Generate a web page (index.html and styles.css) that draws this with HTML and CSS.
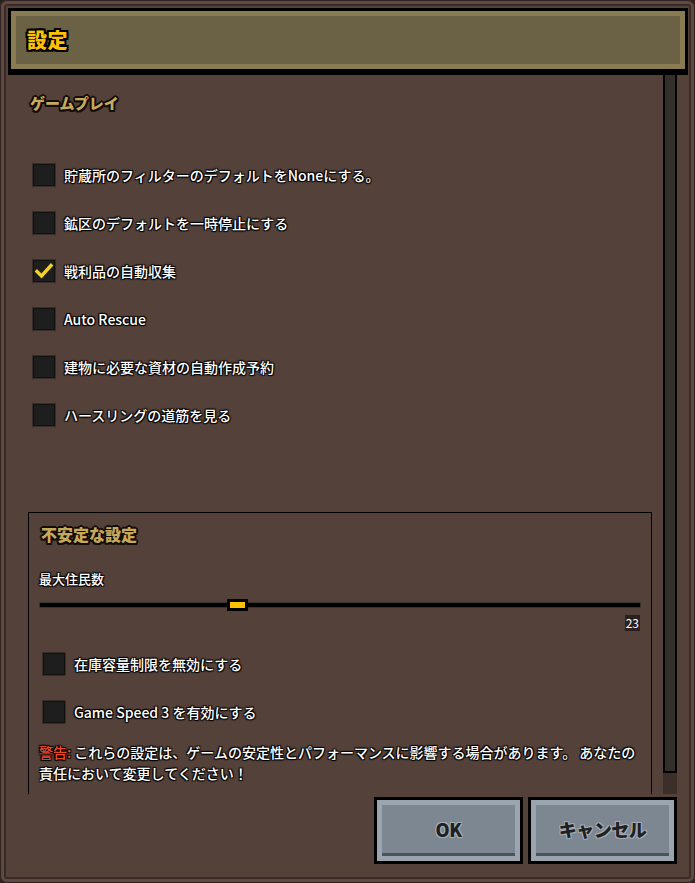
FILE: index.html
```html
<!DOCTYPE html>
<html lang="ja">
<head>
  <meta charset="UTF-8">
  <title>設定</title>
  <link rel="stylesheet" href="styles.css">
</head>
<body>
  <div class="window">
    <header class="title-bar">
      <h1>設定</h1>
    </header>

    <div class="scroll-area">
      <div class="content">
        <h2 class="section-title">ゲームプレイ</h2>

        <div class="option"><span class="box"></span><span class="label">貯蔵所のフィルターのデフォルトをNoneにする。</span></div>
        <div class="option"><span class="box"></span><span class="label">鉱区のデフォルトを一時停止にする</span></div>
        <div class="option">
          <span class="box">
            <svg viewBox="0 0 22 22" width="22" height="22"><path d="M4 11.5 L8.5 16 L18 5.5" fill="none" stroke="#f2cf2c" stroke-width="3.4" stroke-linecap="square" stroke-linejoin="miter"/></svg>
          </span>
          <span class="label">戦利品の自動収集</span>
        </div>
        <div class="option"><span class="box"></span><span class="label">Auto Rescue</span></div>
        <div class="option"><span class="box"></span><span class="label">建物に必要な資材の自動作成予約</span></div>
        <div class="option"><span class="box"></span><span class="label">ハースリングの道筋を見る</span></div>

        <div class="unstable">
          <h2 class="section-title big">不安定な設定</h2>
          <div class="slider-label">最大住民数</div>
          <div class="slider">
            <div class="track"></div>
            <div class="thumb" style="left: 187px;"></div>
          </div>
          <div class="slider-value"><span>23</span></div>

          <div class="option small"><span class="box"></span><span class="label">在庫容量制限を無効にする</span></div>
          <div class="option small"><span class="box"></span><span class="label">Game Speed 3 を有効にする</span></div>

          <p class="warning"><span class="warn">警告:</span> これらの設定は、ゲームの安定性とパフォーマンスに影響する場合があります。 あなたの<br>責任において変更してください！</p>
        </div>
      </div>

      <div class="scrollbar">
        <div class="scroll-thumb"></div>
      </div>
    </div>

    <div class="buttons">
      <button class="btn">OK</button>
      <button class="btn">キャンセル</button>
    </div>
  </div>
</body>
</html>
```

FILE: styles.css
```css
body {
  margin: 0;
  padding: 0;
  background-color: #2a1f1d;
  font-family: "Noto Sans CJK JP", "Noto Sans", sans-serif;
  color: white;
}

.window {
  width: 695px;
  height: 883px;
  box-sizing: border-box;
  padding: 8px 7px 0 8px;
  background-color: #54413a;
  border-radius: 7px;
  box-shadow: inset 0 0 0 1px #2e2220, inset 0 0 0 4px #5f4a43, inset 0 0 0 6px #3a2b28;
  display: flex;
  flex-direction: column;
  overflow: hidden;
}

/* title bar */
.title-bar {
  height: 67px;
  flex-shrink: 0;
  box-sizing: border-box;
  background-color: #6b6246;
  border: 3px solid #000;
  border-bottom-width: 6px;
  box-shadow: inset 0 0 0 5px #8a7c52;
  display: flex;
  align-items: center;
  padding-left: 16px;
}

.title-bar h1 {
  margin: 0;
  font-size: 20px;
  font-weight: 900;
  color: #ffc000;
  letter-spacing: 0.5px;
  text-shadow: -2px -2px 0 #000, 2px -2px 0 #000, -2px 2px 0 #000, 2px 2px 0 #000,
    0 2px 0 #000, 0 -2px 0 #000, 2px 0 0 #000, -2px 0 0 #000;
  position: relative;
  top: -1px;
}

/* scrolling panel */
.scroll-area {
  height: 719px;
  flex-shrink: 0;
  display: flex;
  overflow: hidden;
}

.content {
  width: 655px;
  padding-left: 22px;
  box-sizing: border-box;
}

.section-title {
  margin: 18px 0 38px 0;
  font-size: 15px;
  line-height: 20px;
  font-weight: 900;
  color: #c7a95c;
  text-shadow: -1.5px -1.5px 0 #120c0a, 1.5px -1.5px 0 #120c0a, -1.5px 1.5px 0 #120c0a, 1.5px 1.5px 0 #120c0a,
    0 2px 0 #120c0a, 2px 0 0 #120c0a, -2px 0 0 #120c0a, 0 -2px 0 #120c0a;
}

.option {
  height: 48px;
  display: flex;
  align-items: center;
  gap: 9px;
  padding-left: 3px;
}

.box {
  width: 22px;
  height: 22px;
  box-sizing: border-box;
  background-color: #1e1e1e;
  border: 1px solid #111;
  box-shadow: 0 0 0 1px #3a2d29;
  flex-shrink: 0;
}

.box svg {
  display: block;
  margin: -1px;
}

.label {
  font-size: 14px;
  font-weight: 500;
  text-shadow: 1px 1px 1px #000, -1px -1px 1px #000, 1px -1px 1px #000, -1px 1px 1px #000;
}

/* unstable settings */
.unstable {
  margin: 73px 0 0 -2px;
  width: 624px;
  min-height: 320px;
  box-sizing: border-box;
  border: 1px solid #000;
  padding: 0 4px 0 10px;
}

.section-title.big {
  font-size: 16px;
  margin: 11px 0 0 2px;
  line-height: 20px;
}

.slider-label {
  margin-top: 26px;
  font-size: 13px;
  line-height: 18px;
  font-weight: 500;
  text-shadow: 1px 1px 1px #000, -1px -1px 1px #000, 1px -1px 1px #000, -1px 1px 1px #000;
}

.slider {
  position: relative;
  height: 12px;
  margin: 11px 7px 0 1px;
}

.track {
  position: relative;
  top: 4px;
  height: 4px;
  background-color: #000;
  box-shadow: 0 0 0 1px #3a3431;
}

.thumb {
  position: absolute;
  top: 0;
  width: 21px;
  height: 12px;
  box-sizing: border-box;
  background-color: #ffc000;
  border: 3px solid #000;
}

.slider-value {
  display: flex;
  justify-content: flex-end;
  margin: 4px 7px 0 0;
}

.slider-value span {
  font-size: 12px;
  line-height: 16px;
  background-color: #2a201d;
  padding: 0 1px;
}

.option.small {
  margin-top: 9px;
  height: 48px;
  padding-left: 4px;
}

.option.small + .option.small {
  margin-top: 0;
}

.warning {
  margin: 6px 0 0 0;
  font-size: 14px;
  line-height: 21px;
  font-weight: 500;
  white-space: nowrap;
  text-shadow: 1px 1px 1px #000, -1px -1px 1px #000, 1px -1px 1px #000, -1px 1px 1px #000;
}

.warn {
  color: #ee4a2e;
}

/* scrollbar */
.scrollbar {
  width: 14px;
  background-color: #3c2e29;
}

.scroll-thumb {
  height: 698px;
  box-sizing: border-box;
  background-color: #333029;
  border: 2px solid #000;
  border-top: none;
}

/* footer buttons */
.buttons {
  display: flex;
  justify-content: flex-end;
  gap: 5px;
  padding-right: 11px;
  margin-top: 3px;
}

.btn {
  width: 149px;
  height: 67px;
  box-sizing: border-box;
  border: 3px solid #000;
  background-color: #7d8791;
  box-shadow: inset 0 0 0 5px #9aa5af, inset 0 -8px 0 #4b535a;
  font-family: "Noto Sans CJK JP", "Noto Sans", sans-serif;
  font-size: 18px;
  font-weight: 900;
  letter-spacing: -0.5px;
  color: #1e2022;
  text-shadow: -1px -1px 0 #a4adb5, 1px -1px 0 #a4adb5, -1px 1px 0 #a4adb5, 1px 1px 0 #a4adb5;
  padding: 0 0 4px 0;
  cursor: pointer;
}
```
